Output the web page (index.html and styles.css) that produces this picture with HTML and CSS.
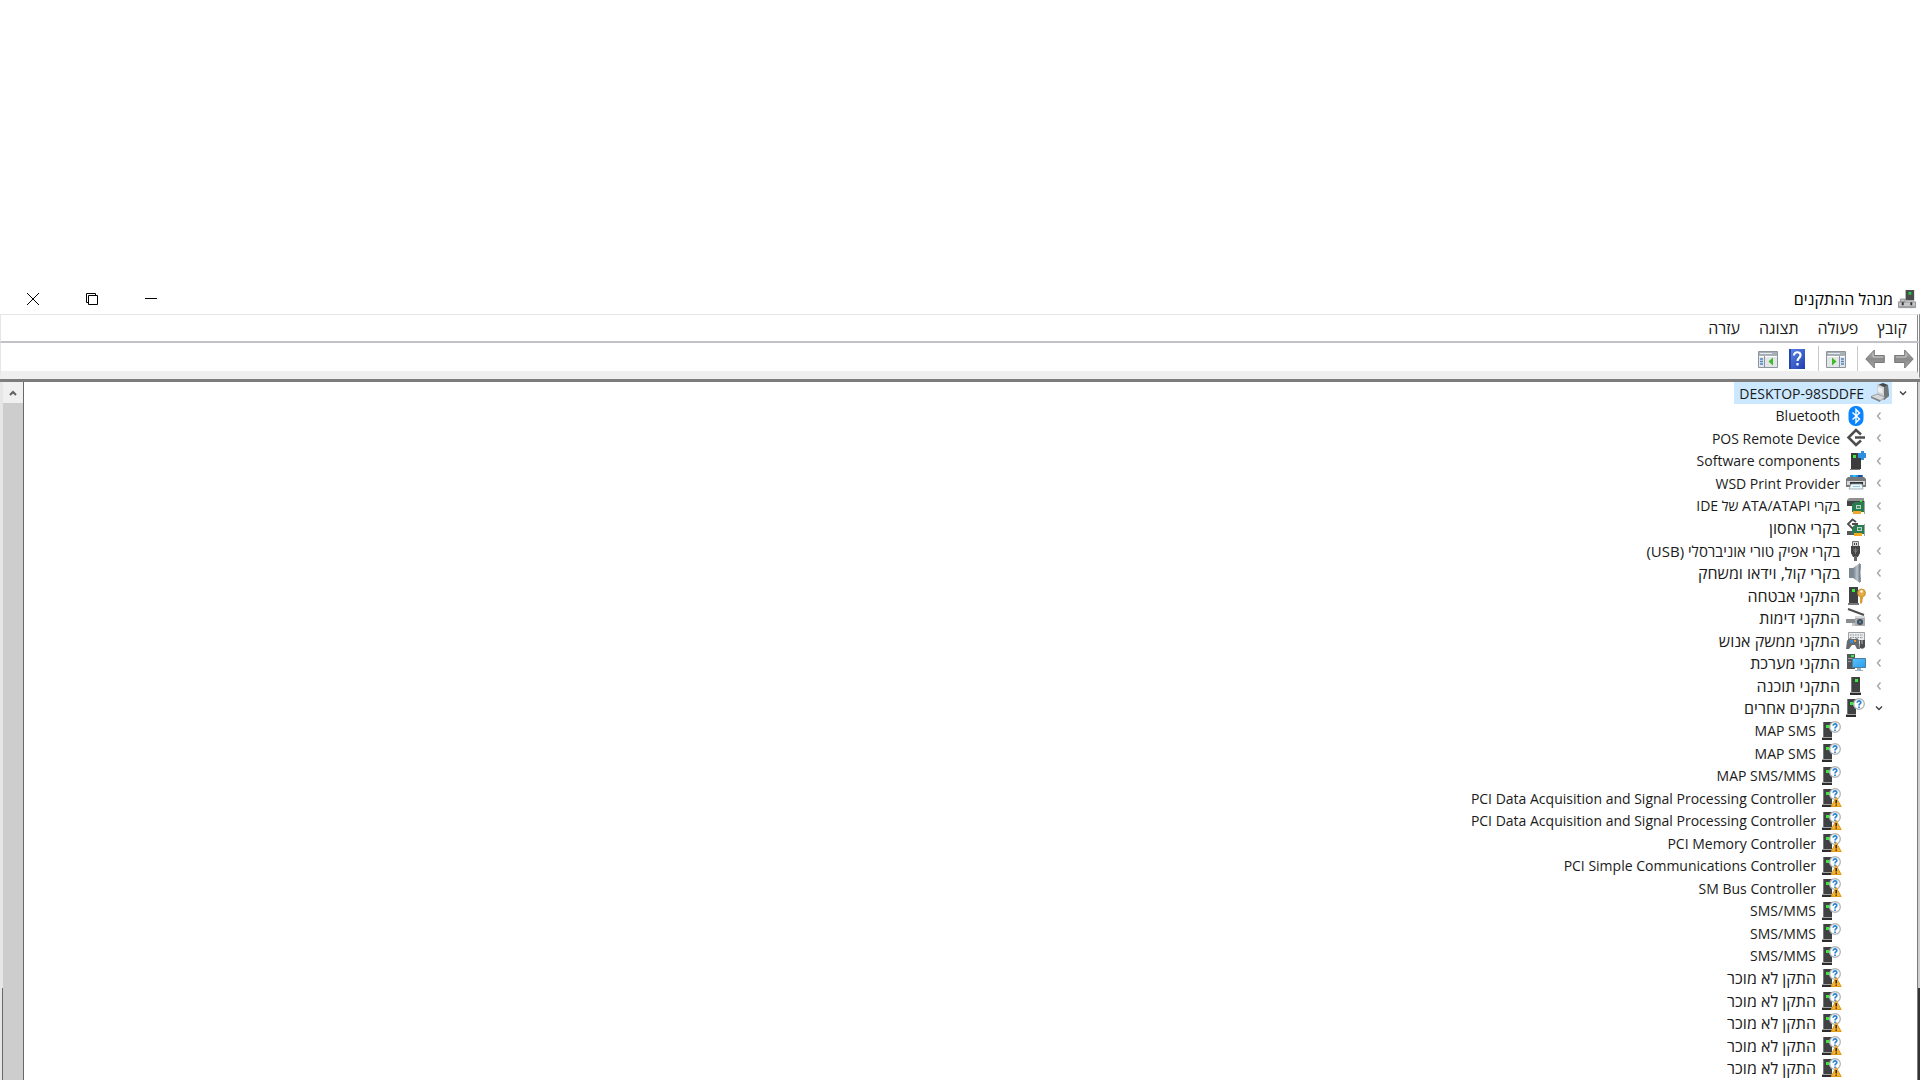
FILE: index.html
```html
<!DOCTYPE html>
<html lang="he" dir="rtl">
<head>
    <meta charset="UTF-8">
    <meta name="viewport" content="width=device-width, initial-scale=1.0">
    <title>מנהל ההתקנים</title>
    <link rel="stylesheet" href="styles.css">
</head>
<body>

<!-- Icons -->
<svg class="sprite" aria-hidden="true">
    <defs>
        <linearGradient id="gray" x1="0" y1="0" x2="0" y2="1">
            <stop offset="0" stop-color="#b8b8b8"/>
            <stop offset="0.5" stop-color="#8a8a8a"/>
            <stop offset="1" stop-color="#a8a8a8"/>
        </linearGradient>
        <linearGradient id="blue" x1="0" y1="0" x2="1" y2="1">
            <stop offset="0" stop-color="#5c86e8"/>
            <stop offset="1" stop-color="#1f3fae"/>
        </linearGradient>
        <linearGradient id="screen" x1="0" y1="0" x2="1" y2="1">
            <stop offset="0" stop-color="#5cc3fa"/>
            <stop offset="1" stop-color="#2a9df0"/>
        </linearGradient>
        <linearGradient id="cone" x1="0" y1="0" x2="1" y2="0">
            <stop offset="0" stop-color="#76828c"/>
            <stop offset="0.6" stop-color="#b9c4cc"/>
            <stop offset="1" stop-color="#6d7780"/>
        </linearGradient>
    </defs>
    <symbol id="i-tower" viewBox="0 0 20 20">
        <path d="M5 1h9v16H5z" fill="#3f4142"/>
        <path d="M5 1h1v16H5z" fill="#77797a"/>
        <path d="M4 17h11v2H4z" fill="#2b2d2e"/>
        <path d="M4 16h11v1H4z" fill="#a3a3a3"/>
        <path d="M9 3h3v3H9z" fill="#3bea3b"/>
    </symbol>
    <symbol id="i-unknown" viewBox="0 0 20 20">
        <path d="M1 1h9v16H1z" fill="#3f4142"/>
        <path d="M1 1h1v16H1z" fill="#77797a"/>
        <path d="M0 17h10v2H0z" fill="#2b2d2e"/>
        <path d="M0 16h10v1H0z" fill="#a3a3a3"/>
        <circle cx="13" cy="6" r="5.300" fill="#fff" stroke="#b4b8ba" stroke-width="1.400"/>
        <path d="M4 4h3v3H4z" fill="#3bea3b"/>
        <path d="M11.200 4.700C11.200 2.200 15 2.400 14.800 4.700c-.2 1.300-1.800 1.200-1.800 2.700M13 8.400v1.500" fill="none" stroke="#2a83d0" stroke-width="1.700"/>
    </symbol>
    <symbol id="i-warning" viewBox="0 0 20 20">
        <use href="#i-unknown"/>
        <path d="M14.200 9.500 19.200 18.500H9.200z" fill="#f8b32d" stroke="#e09a1c" stroke-width="1" stroke-linejoin="round"/>
        <path d="M14.200 12v3.500M14.200 16.500v1.300" stroke="#2c2410" stroke-width="1.500"/>
    </symbol>
    <symbol id="i-manager" viewBox="0 0 20 20">
        <path d="M8 0h9v11H8z" fill="#4a4c4d"/>
        <path d="M11 2h3v3h-3z" fill="#28c840"/>
        <path d="M2.500 9.500h5v3h-5zM.500 12.500h18v6H.500z" fill="#c3c5c6" stroke="#8e9091" stroke-width="1"/>
        <path d="M4 13h2v3H4zM13 13h2v3h-2z" fill="#333"/>
        <path d="M1 17h17v2H1z" fill="#9b9d9e"/>
    </symbol>
    <symbol id="i-computer" viewBox="0 0 20 20">
        <path d="M7 2l5-1.500L18 2l1 11-5 4-7-3z" fill="#9b9fa1"/>
        <path d="M14 4l4-2 1 11-5 4z" fill="#6f7476"/>
        <path d="M7 2l7 2v12l-7-2z" fill="#cdd1d3"/>
        <path d="M8 4l4.500 1.200v5L8 9z" fill="#eceeef"/>
        <path d="M9 1.500l4-1.500 5 2-4 2z" fill="#45494b"/>
        <path d="M1 13.500 7 11l8 3-5 4z" fill="#d5d8d9" stroke="#8f9395" stroke-width=".8"/>
        <path d="M1 13.500 10 17v2l-9-4z" fill="#818587"/>
    </symbol>
    <symbol id="i-bluetooth" viewBox="0 0 20 20">
        <rect x="2.500" y="0" width="15" height="20" rx="7" fill="#0a84ff"/>
        <path d="M6.500 6.500 13.500 13 10 16.500v-13L13.500 7l-7 6.500" fill="none" stroke="#fff" stroke-width="1.400"/>
    </symbol>
    <symbol id="i-pos" viewBox="0 0 20 20">
        <path d="M15 6.500 10 2 2.500 9.500 10 17l5-4.500" fill="none" stroke="#4b4d4e" stroke-width="2.500"/>
        <path d="M9 9.500h10" stroke="#4b4d4e" stroke-width="2.500"/>
    </symbol>
    <symbol id="i-component" viewBox="0 0 20 20">
        <path d="M5 2h10v16H5z" fill="#3a3c3d"/>
        <path d="M4 18h10v1H4z" fill="#77797a"/>
        <path d="M7 4h3v3H7z" fill="#3bea3b"/>
        <path d="M12 2h3V0h3v2h2v5h-2v2h-3V7h-3z" fill="#2e8fdc"/>
    </symbol>
    <symbol id="i-printer" viewBox="0 0 20 20">
        <path d="M4 2h13v5H4z" fill="#2f8fe0"/>
        <path d="M7 2h3v3H7z" fill="#25c4ea"/>
        <path d="M12 2h4v3h-4z" fill="#164f9e"/>
        <path d="M0 6l2-2h16l2 2v8H0z" fill="#77797b"/>
        <path d="M1 8h18v4H1z" fill="#d4d6d7"/>
        <path d="M4 9h13v3H4z" fill="#303233"/>
        <path d="M5 11h11l1 5H3z" fill="#eef6fa" stroke="#90a0a9" stroke-width=".8"/>
        <path d="M7 13h7v1H7z" fill="#84cbe8"/>
    </symbol>
    <symbol id="i-ide" viewBox="0 0 20 20">
        <path d="M1 4l2-2h15v6H1z" fill="#8f9192"/>
        <path d="M1 5h17v5H1z" fill="#414344"/>
        <path d="M14 4h2v2h-2z" fill="#3bea3b"/>
        <path d="M6 8l3-2h10v10H6z" fill="#2c7a50"/>
        <path d="M10 9h5v4h-5z" fill="#b9d6c4"/>
        <path d="M11 10h3v2h-3z" fill="#3e8d63"/>
        <path d="M7 15h8v3H7z" fill="#f1a823"/>
        <path d="M18 5h1v13h-1z" fill="#9fa4a6"/>
    </symbol>
    <symbol id="i-storage" viewBox="0 0 20 20">
        <path d="M10 4 6.500 1.500 2 6l4.500 4.500L9 8M6 6h6" fill="none" stroke="#4b4d4e" stroke-width="1.800"/>
        <path d="M1 13h8v4H1z" fill="#55585a"/>
        <path d="M6 10l3-3h10v9H6z" fill="#2c7a50"/>
        <path d="M11 9h5v4h-5z" fill="#b9d6c4"/>
        <path d="M12 10h3v2h-3z" fill="#3e8d63"/>
        <path d="M8 15h8v3H8z" fill="#f1a823"/>
        <path d="M18 6h1v12h-1z" fill="#9fa4a6"/>
    </symbol>
    <symbol id="i-usb" viewBox="0 0 20 20">
        <path d="M6.500.500h6v5h-6z" fill="#d8d8d8" stroke="#777" stroke-width="1"/>
        <path d="M8 2h1v2H8zM10 2h1v2h-1z" fill="#444"/>
        <path d="M5 5h9v7l-2 4H7l-2-4z" fill="#434546"/>
        <path d="M8 15h3v5H8z" fill="#636566"/>
        <path d="M9.500 7v6M8 8v2l1.500 1M11 8v2l-1.500 1" fill="none" stroke="#8b8d8e" stroke-width=".7"/>
    </symbol>
    <symbol id="i-sound" viewBox="0 0 20 20">
        <path d="M3 5h4v10H3z" fill="#7b8791"/>
        <path d="M7 5l7-5v20l-7-5z" fill="url(#cone)"/>
        <path d="M13 1q3 9 0 18h2V1z" fill="#89949c"/>
    </symbol>
    <symbol id="i-security" viewBox="0 0 20 20">
        <path d="M3 1h9v16H3z" fill="#3f4142"/>
        <path d="M2 17h11v2H2z" fill="#77797a"/>
        <path d="M6 3h3v3H6z" fill="#3bea3b"/>
        <circle cx="15.500" cy="7" r="4" fill="#e5ac45" stroke="#b98325" stroke-width=".7"/>
        <circle cx="15.500" cy="5.500" r="1.200" fill="#fff"/>
        <path d="M14 10h3v3l-1 1 1 1-1 1v1l-1 1-1-1z" fill="#d99d36"/>
    </symbol>
    <symbol id="i-imaging" viewBox="0 0 20 20">
        <path d="M2 1 18 7" stroke="#4c4e4f" stroke-width="2"/>
        <path d="M0 11h9v4H0z" fill="#8b8e90"/>
        <path d="M6 15h5v3H6z" fill="#c5c8ca"/>
        <path d="M9 8h10v10H9z" fill="#a9acae"/>
        <path d="M9 8h10v2H9z" fill="#d8dadb"/>
        <circle cx="14" cy="14" r="3" fill="#454b50"/>
        <circle cx="14" cy="14" r="1.200" fill="#3f90c9"/>
    </symbol>
    <symbol id="i-hid" viewBox="0 0 20 20">
        <path d="M2.500 1.500h16v8h-16z" fill="#e8eaeb" stroke="#9da1a4" stroke-width="1"/>
        <path d="M4 4h13M4 6.500h13" stroke="#8e9295" stroke-width="1" stroke-dasharray="1.500 1"/>
        <path d="M1 10q2-4 5-2h3q3-2 4 2l1 8h-3l-2-4H6l-3 4H0z" fill="#666a6d"/>
        <path d="M14 9h5v7q-2 3-5 1z" fill="#4b4f51"/>
        <path d="M16 9v4" stroke="#b9bcbd" stroke-width="1"/>
        <path d="M4 9h3v3H4z" fill="#2f8fe0"/>
        <path d="M8 9h2v2H8z" fill="#eb9b31"/>
    </symbol>
    <symbol id="i-system" viewBox="0 0 20 20">
        <path d="M1 1h8v15H1z" fill="#55585a"/>
        <path d="M2 5h6v1H2zM2 8h3v1H2z" fill="#999c9d"/>
        <path d="M5 2h3v2H5z" fill="#3bea3b"/>
        <path d="M6.500 5.500h13v9h-13z" fill="url(#screen)" stroke="#4d7f9e" stroke-width="1"/>
        <path d="M11 15h4v2h2v1H9v-1h2z" fill="#9fb4c0"/>
    </symbol>
    <symbol id="i-forward" viewBox="0 0 20 20">
        <path d="M.700 6.500h10V1l8.500 9-8.500 9v-5.500H.700z" fill="url(#gray)" stroke="#777" stroke-width="1"/>
        <path d="M2 8h10V4.500" fill="none" stroke="#c9c9c9" stroke-width="1"/>
    </symbol>
    <symbol id="i-back" viewBox="0 0 20 20">
        <path d="M19.300 6.500h-10V1L.800 10l8.500 9v-5.500h10z" fill="url(#gray)" stroke="#777" stroke-width="1"/>
        <path d="M18 8H8V4.500" fill="none" stroke="#c9c9c9" stroke-width="1"/>
    </symbol>
    <symbol id="i-help" viewBox="0 0 20 20">
        <path d="M2 0h16v20H2z" fill="url(#blue)"/>
        <path d="M2 0h2v20H2z" fill="#2545a8"/>
        <path d="M7 6.500C7 2 14 2.300 13.500 6.500c-.3 2.500-3 2.500-3 5.500M10.500 14v2.500" fill="none" stroke="#fff" stroke-width="2.200"/>
    </symbol>
    <symbol id="i-pane-start" viewBox="0 0 20 20">
        <path d="M.500 2.500h19v16H.500z" fill="#fff" stroke="#8d949b" stroke-width="1"/>
        <path d="M1 3h18v4H1z" fill="#a7afb7"/>
        <path d="M2 4.500h12" stroke="#e4e8eb" stroke-width="1"/>
        <path d="M1 8h18v10H1z" fill="#e3e6e8"/>
        <path d="M2 10h3M2 12.500h3M2 15h3" stroke="#4c86c2" stroke-width="1.300"/>
        <path d="M6.500 7v11" stroke="#8d949b" stroke-width="1"/>
        <path d="M15 8.500v8L10.500 12.500z" fill="#43b929"/>
    </symbol>
    <symbol id="i-pane-end" viewBox="0 0 20 20">
        <path d="M.500 2.500h19v16H.500z" fill="#fff" stroke="#8d949b" stroke-width="1"/>
        <path d="M1 3h18v4H1z" fill="#a7afb7"/>
        <path d="M2 4.500h12" stroke="#e4e8eb" stroke-width="1"/>
        <path d="M1 8h18v10H1z" fill="#e3e6e8"/>
        <path d="M15 10h3M15 12.500h3M15 15h3" stroke="#4c86c2" stroke-width="1.300"/>
        <path d="M13.500 7v11" stroke="#8d949b" stroke-width="1"/>
        <path d="M6 8.500v8l4.500-4z" fill="#43b929"/>
    </symbol>
    <symbol id="i-open" viewBox="0 0 16 16">
        <path d="M5 6.500 8 9.500l3-3" fill="none" stroke="#404040" stroke-width="1.400"/>
    </symbol>
    <symbol id="i-closed" viewBox="0 0 16 16">
        <path d="M9.500 4.500 6.500 8l3 3.500" fill="none" stroke="#a6a6a6" stroke-width="1.400"/>
    </symbol>
</svg>

<div class="window">
    <header class="titlebar">
        <svg class="app-icon"><use href="#i-manager"/></svg>
        <h1 class="title">מנהל ההתקנים</h1>
        <div class="controls">
            <button class="control" aria-label="מזער"><svg viewBox="0 0 12 12"><path d="M0 5.500h12"/></svg></button>
            <button class="control" aria-label="שחזר"><svg viewBox="0 0 12 12"><path d="M2.500 2.500h9v9h-9zM2.500 9.500h-2v-9h9v2"/></svg></button>
            <button class="control" aria-label="סגור"><svg viewBox="0 0 12 12"><path d="M0 0l12 12M12 0 0 12"/></svg></button>
        </div>
    </header>

    <nav class="menubar">
        <button class="menu">קובץ</button>
        <button class="menu">פעולה</button>
        <button class="menu">תצוגה</button>
        <button class="menu">עזרה</button>
    </nav>

    <div class="toolbar">
        <button class="tool" aria-label="אחורה"><svg class="icon"><use href="#i-forward"/></svg></button>
        <button class="tool" aria-label="קדימה"><svg class="icon"><use href="#i-back"/></svg></button>
        <span class="separator"></span>
        <button class="tool" aria-label="הצג עץ"><svg class="icon"><use href="#i-pane-end"/></svg></button>
        <span class="separator"></span>
        <button class="tool" aria-label="עזרה"><svg class="icon"><use href="#i-help"/></svg></button>
        <button class="tool" aria-label="הצג פעולות"><svg class="icon"><use href="#i-pane-start"/></svg></button>
    </div>

    <main class="content">
        <div class="edge"></div>
        <ul class="tree">
            <li class="node"><svg class="arrow"><use href="#i-open"/></svg><span class="item selected"><svg class="icon"><use href="#i-computer"/></svg><bdi>DESKTOP-98SDDFE</bdi></span></li>
            <li class="node level1"><svg class="arrow"><use href="#i-closed"/></svg><span class="item"><svg class="icon"><use href="#i-bluetooth"/></svg><bdi>Bluetooth</bdi></span></li>
            <li class="node level1"><svg class="arrow"><use href="#i-closed"/></svg><span class="item"><svg class="icon"><use href="#i-pos"/></svg><bdi>POS Remote Device</bdi></span></li>
            <li class="node level1"><svg class="arrow"><use href="#i-closed"/></svg><span class="item"><svg class="icon"><use href="#i-component"/></svg><bdi>Software components</bdi></span></li>
            <li class="node level1"><svg class="arrow"><use href="#i-closed"/></svg><span class="item"><svg class="icon"><use href="#i-printer"/></svg><bdi>WSD Print Provider</bdi></span></li>
            <li class="node level1"><svg class="arrow"><use href="#i-closed"/></svg><span class="item"><svg class="icon"><use href="#i-ide"/></svg><bdi>בקרי ATA/ATAPI של IDE</bdi></span></li>
            <li class="node level1"><svg class="arrow"><use href="#i-closed"/></svg><span class="item"><svg class="icon"><use href="#i-storage"/></svg><bdi class="he">בקרי אחסון</bdi></span></li>
            <li class="node level1"><svg class="arrow"><use href="#i-closed"/></svg><span class="item"><svg class="icon"><use href="#i-usb"/></svg><bdi class="mixed">בקרי אפיק טורי אוניברסלי (USB)</bdi></span></li>
            <li class="node level1"><svg class="arrow"><use href="#i-closed"/></svg><span class="item"><svg class="icon"><use href="#i-sound"/></svg><bdi class="he">בקרי קול, וידאו ומשחק</bdi></span></li>
            <li class="node level1"><svg class="arrow"><use href="#i-closed"/></svg><span class="item"><svg class="icon"><use href="#i-security"/></svg><bdi class="he">התקני אבטחה</bdi></span></li>
            <li class="node level1"><svg class="arrow"><use href="#i-closed"/></svg><span class="item"><svg class="icon"><use href="#i-imaging"/></svg><bdi class="he">התקני דימות</bdi></span></li>
            <li class="node level1"><svg class="arrow"><use href="#i-closed"/></svg><span class="item"><svg class="icon"><use href="#i-hid"/></svg><bdi class="he">התקני ממשק אנוש</bdi></span></li>
            <li class="node level1"><svg class="arrow"><use href="#i-closed"/></svg><span class="item"><svg class="icon"><use href="#i-system"/></svg><bdi class="he">התקני מערכת</bdi></span></li>
            <li class="node level1"><svg class="arrow"><use href="#i-closed"/></svg><span class="item"><svg class="icon"><use href="#i-tower"/></svg><bdi class="he">התקני תוכנה</bdi></span></li>
            <li class="node level1"><svg class="arrow"><use href="#i-open"/></svg><span class="item"><svg class="icon"><use href="#i-unknown"/></svg><bdi class="he">התקנים אחרים</bdi></span></li>
            <!-- התקנים אחרים -->
            <li class="node level2"><span class="item"><svg class="icon"><use href="#i-unknown"/></svg><bdi>MAP SMS</bdi></span></li>
            <li class="node level2"><span class="item"><svg class="icon"><use href="#i-unknown"/></svg><bdi>MAP SMS</bdi></span></li>
            <li class="node level2"><span class="item"><svg class="icon"><use href="#i-unknown"/></svg><bdi>MAP SMS/MMS</bdi></span></li>
            <li class="node level2"><span class="item"><svg class="icon"><use href="#i-warning"/></svg><bdi>PCI Data Acquisition and Signal Processing Controller</bdi></span></li>
            <li class="node level2"><span class="item"><svg class="icon"><use href="#i-warning"/></svg><bdi>PCI Data Acquisition and Signal Processing Controller</bdi></span></li>
            <li class="node level2"><span class="item"><svg class="icon"><use href="#i-warning"/></svg><bdi>PCI Memory Controller</bdi></span></li>
            <li class="node level2"><span class="item"><svg class="icon"><use href="#i-warning"/></svg><bdi>PCI Simple Communications Controller</bdi></span></li>
            <li class="node level2"><span class="item"><svg class="icon"><use href="#i-warning"/></svg><bdi>SM Bus Controller</bdi></span></li>
            <li class="node level2"><span class="item"><svg class="icon"><use href="#i-unknown"/></svg><bdi>SMS/MMS</bdi></span></li>
            <li class="node level2"><span class="item"><svg class="icon"><use href="#i-unknown"/></svg><bdi>SMS/MMS</bdi></span></li>
            <li class="node level2"><span class="item"><svg class="icon"><use href="#i-unknown"/></svg><bdi>SMS/MMS</bdi></span></li>
            <li class="node level2"><span class="item"><svg class="icon"><use href="#i-warning"/></svg><bdi class="he">התקן לא מוכר</bdi></span></li>
            <li class="node level2"><span class="item"><svg class="icon"><use href="#i-warning"/></svg><bdi class="he">התקן לא מוכר</bdi></span></li>
            <li class="node level2"><span class="item"><svg class="icon"><use href="#i-warning"/></svg><bdi class="he">התקן לא מוכר</bdi></span></li>
            <li class="node level2"><span class="item"><svg class="icon"><use href="#i-warning"/></svg><bdi class="he">התקן לא מוכר</bdi></span></li>
            <li class="node level2"><span class="item"><svg class="icon"><use href="#i-warning"/></svg><bdi class="he">התקן לא מוכר</bdi></span></li>
        </ul>
        <div class="scrollbar">
            <button class="scroll-up" aria-label="גלול למעלה"><svg viewBox="0 0 8 6"><path d="M1 5l3-3 3 3"/></svg></button>
            <div class="thumb"></div>
        </div>
        <div class="edge edge-left"></div>
    </main>
</div>

</body>
</html>
```
FILE: styles.css
```css
* {
    box-sizing: border-box;
}
body {
    margin: 0;
    background-color: #fff;
    color: #1a1a1a;
    font-family: "Open Sans", "Noto Sans", sans-serif;
    font-size: 14px;
}
button {
    padding: 0;
    border: none;
    background: none;
    color: inherit;
    font: inherit;
}
svg {
    display: block;
    flex: none;
}
.sprite {
    position: absolute;
    width: 0;
    height: 0;
}
.window {
    display: flex;
    flex-direction: column;
    height: 100vh;
    padding-top: 284px;
    overflow: hidden;
}

/* Title bar */
.titlebar {
    display: flex;
    align-items: center;
    height: 30px;
    padding-right: 3px;
}
.app-icon {
    width: 19px;
    height: 19px;
}
.title {
    margin: 0 5px 0 auto;
    color: #000;
    font-size: 16px;
    font-weight: normal;
}
.controls {
    display: flex;
    padding-left: 3px;
}
.control {
    display: grid;
    place-items: center;
    width: 59px;
    height: 30px;
}
.control svg {
    width: 12px;
    height: 12px;
    fill: none;
    stroke: #000;
}

/* Menu and toolbar */
.menubar {
    display: flex;
    align-items: center;
    gap: 19px;
    height: 29px;
    padding-right: 10px;
    border: 1px solid #e6e6e6;
    border-right: 3px double #8a8a8a;
    border-bottom: 2px solid #c0c2c5;
    font-size: 16px;
}
.toolbar {
    display: flex;
    align-items: center;
    height: 36px;
    padding: 3px 3px 0 0;
    border-right: 3px double #8a8a8a;
    border-left: 1px solid #e6e6e6;
    border-bottom: 8px solid #efefef;
    gap: 9px;
}
.separator {
    width: 1px;
    height: 25px;
    margin: 0 -2px 0 2px;
    background-color: #c8c8c8;
}
.icon {
    width: 20px;
    height: 20px;
}

/* Device tree */
.content {
    display: flex;
    flex: 1;
    min-height: 0;
    border-top: 3px solid #7c7c7c;
}
.tree {
    display: grid;
    flex: 1;
    grid-auto-rows: 22px 23px;
    align-content: start;
    margin: 0;
    padding: 0 6px 0 0;
    list-style: none;
    overflow: hidden;
}
.node {
    display: flex;
    align-items: center;
    gap: 3px;
}
.level1 {
    padding-right: 24px;
}
.level2 {
    padding-right: 67px;
}
.arrow {
    width: 16px;
    height: 16px;
}
.item {
    display: flex;
    align-items: center;
    gap: 6px;
    height: 100%;
    padding: 0 2px 0 5px;
    white-space: nowrap;
}
.selected {
    background-color: #cce8ff;
}
.he {
    font-size: 16px;
    line-height: 20px;
}
.mixed {
    font-size: 15px;
    line-height: 20px;
}

.edge {
    width: 3px;
    border-left: 1px solid #7c7c7c;
    background: linear-gradient(#cfcfcf 606px, #333 606px);
}
.edge-left {
    border-left: 2px solid #e6e6e6;
    background: linear-gradient(#e6e6e6 606px, #696969 606px);
}

/* Scroll bar */
.scrollbar {
    display: flex;
    flex-direction: column;
    width: 21px;
    border-right: 1px solid #696969;
}
.scroll-up {
    display: grid;
    place-items: center;
    height: 21px;
    background-color: #f0f0f0;
}
.scroll-up svg {
    width: 8px;
    height: 6px;
    fill: none;
    stroke: #606060;
    stroke-width: 2;
}
.thumb {
    flex: 1;
    background-color: #cdcdcd;
}
```
